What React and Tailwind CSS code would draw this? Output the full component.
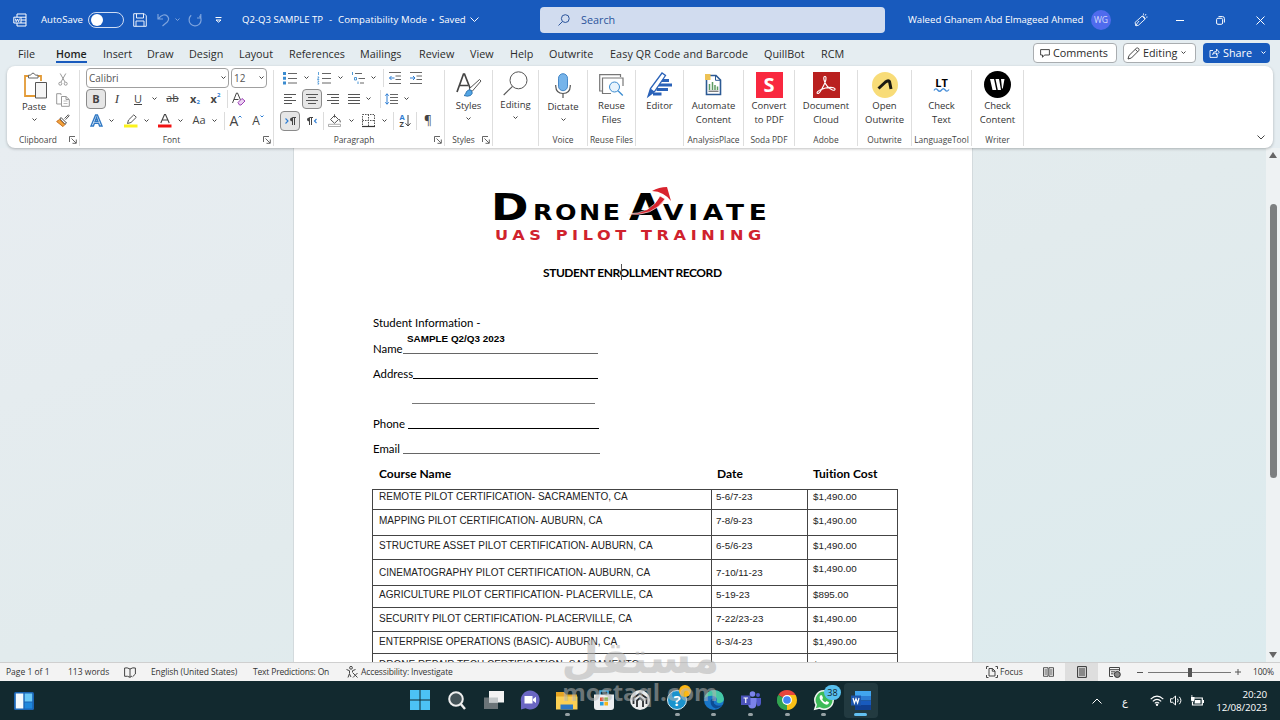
import { clsx } from 'clsx';

const TABS = [
  ['File', 'w-[38px]'],
  ['Home', 'w-[47px]'],
  ['Insert', 'w-[44px]'],
  ['Draw', 'w-[42px]'],
  ['Design', 'w-[50px]'],
  ['Layout', 'w-[50px]'],
  ['References', 'w-[71px]'],
  ['Mailings', 'w-[59px]'],
  ['Review', 'w-[51px]'],
  ['View', 'w-[40px]'],
  ['Help', 'w-[39px]'],
  ['Outwrite', 'w-[61px]'],
  ['Easy QR Code and Barcode', 'w-[154px] tracking-[0.1px]'],
  ['QuillBot', 'w-[57px]'],
  ['RCM', 'w-[30px]'],
];

const COURSES = [
  { name: 'REMOTE PILOT CERTIFICATION- SACRAMENTO, CA', date: '5-6/7-23', cost: '$1,490.00', h: 'h-[20px]', pad: 'pt-0' },
  { name: 'MAPPING PILOT CERTIFICATION- AUBURN, CA', date: '7-8/9-23', cost: '$1,490.00', h: 'h-[26px]', pad: 'pt-[4px]' },
  { name: 'STRUCTURE ASSET PILOT CERTIFICATION- AUBURN, CA', date: '6-5/6-23', cost: '$1,490.00', h: 'h-[24px]', pad: 'pt-[3px]' },
  { name: 'CINEMATOGRAPHY PILOT CERTIFICATION- AUBURN, CA', date: '7-10/11-23', cost: '$1,490.00', h: 'h-[26px]', pad: 'pt-[6px]', costPad: 'pt-[2px]' },
  { name: 'AGRICULTURE PILOT CERTIFICATION- PLACERVILLE, CA', date: '5-19-23', cost: '$895.00', h: 'h-[22px]', pad: 'pt-[2px]' },
  { name: 'SECURITY PILOT CERTIFICATION- PLACERVILLE, CA', date: '7-22/23-23', cost: '$1,490.00', h: 'h-[24px]', pad: 'pt-[4px]' },
  { name: 'ENTERPRISE OPERATIONS (BASIC)- AUBURN, CA', date: '6-3/4-23', cost: '$1,490.00', h: 'h-[22px]', pad: 'pt-[3px]' },
  { name: 'DRONE REPAIR TECH CERTIFICATION- SACRAMENTO', date: '7-18-23', cost: '$495.00', h: 'h-[24px]', pad: 'pt-[4px]' },
];

function Svg({ w, h, children, className }) {
  return (
    <svg width={w} height={h} viewBox={`0 0 ${w} ${h}`} fill="none" className={clsx('block shrink-0 overflow-visible', className)}>
      {children}
    </svg>
  );
}

function Chevron({ w = 5, className = 'text-[#444]' }) {
  return (
    <Svg w={w} h={w / 2 + 1} className={className}>
      <path d={`M.5 .5 L${w / 2} ${w / 2} L${w - 0.5} .5`} stroke="currentColor" strokeWidth="1" />
    </Svg>
  );
}

function Cell({ className, children }) {
  return <div className={clsx('flex shrink-0 items-center justify-center', className)}>{children}</div>;
}

function Rule({ className }) {
  return <div className={clsx('h-[18px] w-px shrink-0 bg-[#dcdcdc]', className)} />;
}

function Lines({ rows, color = '#555' }) {
  return (
    <Svg w={12} h={12}>
      {rows.map(([x1, x2], i) => (
        <path key={i} d={`M${x1} ${i * 3 + 1.5}H${x2}`} stroke={color} strokeWidth="1" />
      ))}
    </Svg>
  );
}

function Launcher() {
  return (
    <Svg w={8} h={8}>
      <path d="M.5 6V.5H6M2.5 2.5L7 7M7.3 3.5V7.3H3.5" stroke="#555" strokeWidth=".9" />
    </Svg>
  );
}

function TitleBar() {
  return (
    <div className="flex h-10 shrink-0 items-center bg-[#185abd] text-[9.6px] whitespace-nowrap text-white">
      <Cell className="ml-[12px] w-4">
        <Svg w={14} h={14}>
          <path d="M4 1H13V13H4V10M4 4V1M8 4.2H13M8 7H13M8 10H13" stroke="#fff" />
          <path d="M.8 4.2H8V10H.8Z" fill="#185abd" stroke="#fff" />
          <path d="M2.3 5.6L3.2 8.7L4.4 6L5.6 8.7L6.5 5.6" stroke="#fff" strokeWidth=".9" />
        </Svg>
      </Cell>
      <div className="ml-[13px] w-[47px]">AutoSave</div>
      <div className="flex h-4 w-9 items-center rounded-full border border-[#cfdcf3] pl-[2px]">
        <div className="h-3 w-3 rounded-full bg-white" />
      </div>
      <Cell className="ml-2 w-4">
        <Svg w={14} h={14}>
          <path d="M.7 .7H11.2L13.3 2.8V13.3H.7ZM3.5 .7V5H10.5V.7M3 13.3V8H11V13.3" stroke="#e8effb" />
        </Svg>
      </Cell>
      <Cell className="ml-[7px] w-4 text-[#7da3dd]">
        <Svg w={13} h={14}>
          <path d="M1 1V6H6M1.2 5.8C5 1.5 8 1 10.2 3C12.2 5 12 7 10.2 9L5.5 13" stroke="currentColor" strokeWidth="1.2" />
        </Svg>
      </Cell>
      <Cell className="w-[13px]"><Chevron className="text-[#7da3dd]" /></Cell>
      <Cell className="ml-[3px] w-4 text-[#7da3dd]">
        <Svg w={14} h={14}>
          <path d="M12.8 1V5H9M3.2 2.3A6 6 0 1 0 11.5 2.8L12.8 4.6" stroke="currentColor" strokeWidth="1.2" />
        </Svg>
      </Cell>
      <Cell className="ml-[6px] w-[18px]">
        <Svg w={7} h={6}><path d="M.5 .5H6.5M1 3L3.5 5.2L6 3Z" stroke="#fff" /></Svg>
      </Cell>
      <div className="ml-[15px] w-[87px]">Q2-Q3 SAMPLE TP</div>
      <div className="w-[9px]">-</div>
      <div className="w-[93px] tracking-[0.1px]">Compatibility Mode</div>
      <div className="w-[8px]">•</div>
      <div className="w-[29px]">Saved</div>
      <Cell className="w-3"><Chevron w={9} className="text-white" /></Cell>
      <div className="ml-[60px] flex h-[26px] w-[345px] items-center rounded bg-[#d1dcef] text-[10.8px] text-[#2b549b]">
        <Svg w={12} h={12} className="ml-[18px]">
          <circle cx="7.3" cy="4.6" r="3.9" stroke="#2b549b" />
          <path d="M4.5 7.5L.5 11.5" stroke="#2b549b" />
        </Svg>
        <span className="ml-[11px]">Search</span>
      </div>
      <div className="ml-[23px] w-[183px]">Waleed Ghanem Abd Elmageed Ahmed</div>
      <Cell className="h-5 w-5 rounded-full bg-[#4f6bed] text-[8.5px] text-[#d5dcfa]">WG</Cell>
      <Cell className="ml-[22px] w-4">
        <Svg w={14} h={14}>
          <path d="M8.2 3L1 9.5L2 12.8L4.5 12.2L11 6.2ZM1.5 12.7L5 8M9 2.5L11.5 6M9.5 .5V1.8M12 1L11.2 2.5M13.5 4L12.2 4.2" stroke="#fff" strokeWidth=".9" />
        </Svg>
      </Cell>
      <Cell className="ml-[22px] w-[18px]"><div className="h-px w-2 bg-white" /></Cell>
      <Cell className="ml-[22px] w-[18px]">
        <Svg w={9} h={9}>
          <rect x=".6" y="2.3" width="6" height="6" rx="1.3" stroke="#fff" />
          <path d="M2.5 .6H6.5Q8.4 .6 8.4 2.5V6.5" stroke="#fff" />
        </Svg>
      </Cell>
      <Cell className="ml-[22px] w-[18px]">
        <Svg w={9} h={9}><path d="M.5 .5L8.5 8.5M8.5 .5L.5 8.5" stroke="#fff" /></Svg>
      </Cell>
    </div>
  );
}

function TabRow() {
  return (
    <div className="flex h-[26px] shrink-0 pl-[18px] text-[10.8px] whitespace-nowrap text-[#2b2b2b]">
      {TABS.map(([label, width]) => (
        <div key={label} className={clsx('flex shrink-0 pt-[6px]', width)}>
          <span
            className={clsx(
              'h-[17px] leading-4',
              label === 'Home' && 'border-b-2 border-[#185abd] text-[10.6px] font-semibold text-[#1f1f1f]'
            )}
          >
            {label}
          </span>
        </div>
      ))}
      <div className="mt-[3px] ml-[182px] flex h-5 w-[84px] shrink-0 items-center rounded border border-[#a9adb0] bg-white pl-[6px]">
        <Svg w={10} h={9}>
          <path d="M.6 .6H9.4V6H4.5L2.5 8.3V6H.6Z" stroke="#333" strokeWidth=".9" />
        </Svg>
        <span className="ml-[3px]">Comments</span>
      </div>
      <div className="mt-[3px] ml-[6px] flex h-5 w-[73px] shrink-0 items-center rounded border border-[#a9adb0] bg-white pl-[3px]">
        <Svg w={13} h={13}>
          <path d="M1 12L2 8.5L9.3 1.3Q10.5 .5 11.6 1.5Q12.5 2.6 11.7 3.7L4.4 11L1 12ZM8.3 2.4L10.6 4.7" stroke="#333" strokeWidth=".9" />
        </Svg>
        <span className="ml-[3px]">Editing</span>
        <span className="ml-1"><Chevron /></span>
      </div>
      <div className="mt-[3px] ml-[7px] flex h-5 w-[67px] shrink-0 items-center rounded bg-[#185abd] pl-[6px] text-white">
        <Svg w={11} h={10}>
          <path d="M4 2.5H1V9.4H8.2V7M3.5 6.5Q4 3.5 7.5 3.3V1L10.3 4.2L7.5 7V5Q5 4.8 3.5 6.5Z" stroke="#fff" strokeWidth=".9" />
        </Svg>
        <span className="ml-[3px]">Share</span>
        <span className="ml-[9px]"><Chevron className="text-white" /></span>
      </div>
    </div>
  );
}

function Group({ width, label, launcher, children }) {
  return (
    <div className={clsx('flex h-[76px] shrink-0 flex-col border-r border-[#dedede]', width)}>
      <div className="h-[64px]">{children}</div>
      <div className="flex h-3 items-center text-[8.4px] whitespace-nowrap text-[#444]">
        <div className="flex flex-1 justify-center">{label}</div>
        {launcher && <div className="w-[10px]"><Launcher /></div>}
      </div>
    </div>
  );
}

function BigButton({ icon, lines, chevron, className }) {
  return (
    <div className={clsx('flex flex-col items-center text-[9.5px] leading-[13.5px] whitespace-nowrap text-[#333]', className)}>
      <div className="flex h-[29px] items-center justify-center">{icon}</div>
      {lines.map((line) => (
        <div key={line}>{line}</div>
      ))}
      {chevron && <div className="pt-[4px]"><Chevron /></div>}
    </div>
  );
}

function ClipboardGroup() {
  return (
    <Group width="w-[73px]" label="Clipboard" launcher>
      <div className="flex">
        <BigButton
          className="ml-3 w-[30px] pt-[1px]"
          chevron
          lines={['Paste']}
          icon={
            <Svg w={25} h={27} className="ml-[3px]">
              <path d="M6 4H2V24H12M18 9V4H14" stroke="#e39a35" strokeWidth="1.8" />
              <path d="M5.5 6V3.2H7.5Q10 -1 12.5 3.2H15V6Z" fill="#fff" stroke="#666" />
              <path d="M12.5 10.5H23.5V26H12.5Z" fill="#f5f5f5" stroke="#555" />
            </Svg>
          }
        />
        <div className="-mt-px ml-[6px] flex w-4 flex-col items-center">
          <Cell className="h-[20px]">
            <Svg w={10} h={13}>
              <path d="M2.2 .5L7 9M7.8 .5L3 9" stroke="#999" />
              <circle cx="2.3" cy="10.7" r="1.5" stroke="#999" />
              <circle cx="7.7" cy="10.7" r="1.5" stroke="#999" />
            </Svg>
          </Cell>
          <Cell className="h-[21px]">
            <Svg w={14} h={14}>
              <path d="M5 2V.7H.7V11H5M5.5 3.5H10L13.3 6.5V13.3H5.5ZM10 3.5V6.5H13" stroke="#999" />
              <path d="M7.5 8H11.5M7.5 10.5H11.5" stroke="#bbb" />
            </Svg>
          </Cell>
          <Cell className="h-[21px]">
            <Svg w={14} h={13}>
              <path d="M8.5 4.5L12.3 .8L13.2 1.8L9.6 5.6" fill="#fff" stroke="#555" />
              <path d="M5 3.5L10.5 9L9 10.3L3.8 5Z" fill="#fff" stroke="#444" />
              <path d="M3.5 5.5L8.8 10.6L7 12.6L.6 7.5Z" fill="#f2a33c" stroke="#c96f1c" />
            </Svg>
          </Cell>
        </div>
      </div>
    </Group>
  );
}

function FontGroup() {
  return (
    <Group width="w-[194px]" label="Font" launcher>
      <div className="flex flex-col pl-[6px] text-[#444]">
        <div className="-mt-[2px] flex h-[20px] text-[10px] text-[#555]">
          <div className="flex w-[143px] items-center justify-between rounded border border-[#a0a0a0] px-[2px]">
            Calibri <Chevron />
          </div>
          <div className="ml-[2px] flex w-9 items-center justify-between rounded border border-[#a0a0a0] px-[2px]">
            12 <Chevron />
          </div>
        </div>
        <div className="mt-[1px] flex h-[20px] items-center">
          <Cell className="h-5 w-5 rounded border border-[#8a8a8a] bg-[#e6e6e6] text-[11px] font-bold">B</Cell>
          <Cell className="ml-px w-5 font-['Liberation_Serif'] text-[13px] italic">I</Cell>
          <Cell className="w-[22px] text-[11px] underline">U</Cell>
          <Cell className="w-[10px]"><Chevron /></Cell>
          <Cell className="w-[27px] text-[10.5px] line-through">ab</Cell>
          <Cell className="w-[18px] text-[11px] font-bold">x<span className="pt-[7px] text-[6px] text-[#2b7cd3]">2</span></Cell>
          <Cell className="w-[23px] text-[11px] font-bold">x<span className="pb-[7px] text-[6px] text-[#2b7cd3]">2</span></Cell>
          <Rule />
          <Cell className="w-[22px]">
            <Svg w={14} h={14}>
              <path d="M.5 11L4.5 1H5.5L8.5 8M2 7.5H6.5" stroke="#444" />
              <path d="M6 10.5L10 6.5L13 9L9 13H7.5Z" fill="#ecd3f2" stroke="#9b3fb5" />
            </Svg>
          </Cell>
        </div>
        <div className="flex h-[23px] items-center">
          <Cell className="w-5">
            <Svg w={13} h={13}>
              <path d="M1 12L5.6 1H7.4L12 12H9.6L8.6 9.2H4.4L3.4 12ZM5.1 7.2H7.9L6.5 3.4Z" fill="#fff" stroke="#2f78c4" strokeWidth="1.4" />
            </Svg>
          </Cell>
          <Cell className="w-[10px]"><Chevron /></Cell>
          <Cell className="ml-[5px] w-5">
            <Svg w={14} h={14}>
              <path d="M0 10.5H13.5V13.5H0Z" fill="#fbf21b" />
              <path d="M3.5 9.5L4.5 6L9.8 .8L12.3 3.3L7 8.5Z" fill="#fff" stroke="#555" />
            </Svg>
          </Cell>
          <Cell className="w-[10px]"><Chevron /></Cell>
          <Cell className="ml-1 w-5">
            <Svg w={14} h={14}>
              <path d="M2.8 9L6.5 .5H7.5L11.2 9M4 6H10" stroke="#444" strokeWidth="1.1" />
              <path d="M0 10.5H13.5V13.5H0Z" fill="#f11313" />
            </Svg>
          </Cell>
          <Cell className="w-[10px]"><Chevron /></Cell>
          <Cell className="ml-1 w-5 text-[11px]">Aa</Cell>
          <Cell className="w-[10px]"><Chevron /></Cell>
          <Rule className="ml-[5px]" />
          <Cell className="w-[22px] text-[14px]">A<span className="-mt-[8px]"><Chevron w={4} className="rotate-180 text-[#2b7cd3]" /></span></Cell>
          <Cell className="w-[22px] text-[12px]">A<span className="-mt-[8px]"><Chevron w={4} className="text-[#2b7cd3]" /></span></Cell>
        </div>
      </div>
    </Group>
  );
}

function ListIcon({ kind }) {
  return (
    <Svg w={14} h={12}>
      {kind === 'bullet' && <path d="M0 0H3V3H0ZM0 4.7H3V7.7H0ZM0 9.4H3V12.4H0Z" fill="#3a8bd0" />}
      {kind === 'number' && <path d="M1.5 0V3M.5 5H2L.5 7.5H2.2M.5 9H2L1 10.5L2 12H.5" stroke="#3a8bd0" strokeWidth=".8" />}
      {kind === 'multi' ? (
        <>
          <path d="M1.5 0V3M3.5 5.5H5.5V8H3.5ZM7 9.5V12" stroke="#3a8bd0" strokeWidth=".9" />
          <path d="M4 1.5H11M7.5 6.5H14M9 11H13" stroke="#666" />
        </>
      ) : (
        <path d="M5 1.5H14M5 6.5H14M5 11H14" stroke="#666" />
      )}
    </Svg>
  );
}

function IndentIcon({ out }) {
  return (
    <Svg w={12} h={12}>
      <path d="M0 .5H12M6.5 4H12M6.5 7.5H12M0 11.5H12" stroke="#666" />
      <path d={out ? 'M5.5 6H.5M2.5 4L.5 6L2.5 8' : 'M0 6H5M3 4L5 6L3 8'} stroke="#2b7cd3" />
    </Svg>
  );
}

function ParagraphGroup() {
  return (
    <Group width="w-[171px]" label="Paragraph" launcher>
      <div className="flex flex-col pl-[6px] text-[#444]">
        <div className="-mt-[2px] flex h-[20px] items-center">
          <Cell className="w-5"><ListIcon kind="bullet" /></Cell>
          <Cell className="ml-px w-[10px]"><Chevron /></Cell>
          <Cell className="ml-[3px] w-5"><ListIcon kind="number" /></Cell>
          <Cell className="ml-px w-[10px]"><Chevron /></Cell>
          <Cell className="ml-[3px] w-5"><ListIcon kind="multi" /></Cell>
          <Cell className="w-[10px]"><Chevron /></Cell>
          <Rule className="ml-[5px]" />
          <Cell className="ml-px w-5"><IndentIcon out /></Cell>
          <Cell className="ml-px w-5"><IndentIcon /></Cell>
        </div>
        <div className="mt-[1px] flex h-[20px] items-center">
          <Cell className="w-5"><Lines rows={[[0, 12], [0, 8], [0, 12], [0, 8]]} /></Cell>
          <Cell className="ml-[2px] h-5 w-5 rounded border border-[#8a8a8a] bg-[#e6e6e6]"><Lines rows={[[0, 12], [2, 10], [0, 12], [2, 10]]} /></Cell>
          <Cell className="ml-px w-5"><Lines rows={[[0, 12], [4, 12], [0, 12], [4, 12]]} /></Cell>
          <Cell className="ml-px w-5"><Lines rows={[[0, 12], [0, 12], [0, 12], [0, 12]]} /></Cell>
          <Cell className="w-2"><Chevron /></Cell>
          <Rule className="ml-2" />
          <Cell className="w-5">
            <Svg w={13} h={12}>
              <path d="M5 1.5H13M5 4.5H13M5 7.5H13M5 10.5H13" stroke="#666" />
              <path d="M2 .8V11.2M.3 2.7L2 .8L3.7 2.7M.3 9.3L2 11.2L3.7 9.3" stroke="#2b7cd3" />
            </Svg>
          </Cell>
          <Cell className="w-[10px]"><Chevron /></Cell>
        </div>
        <div className="flex h-[23px] items-center">
          <Cell className="h-5 w-5 rounded border border-[#8a8a8a] bg-[#e6e6e6]">
            <Svg w={11} h={8}>
              <path d="M.5 1.5L3 4L.5 6.5" stroke="#2b7cd3" strokeWidth="1.1" />
              <path d="M7.5 8V.5H11M9.5 .5V8" stroke="#444" />
              <path d="M7.5 .5V4.5Q5 4.5 5 2.5Q5 .5 7.5 .5Z" fill="#444" />
            </Svg>
          </Cell>
          <Cell className="ml-[2px] w-5">
            <Svg w={10} h={8}>
              <path d="M9.5 2L7.5 4L9.5 6" stroke="#2b7cd3" strokeWidth="1.1" />
              <path d="M2.5 8V.5H6M4.5 .5V8" stroke="#444" />
              <path d="M2.5 .5V4.5Q0 4.5 0 2.5Q0 .5 2.5 .5Z" fill="#444" />
            </Svg>
          </Cell>
          <Rule className="ml-px" />
          <Cell className="w-[22px]">
            <Svg w={14} h={13}>
              <path d="M2.5 5.5L6.5 1.5L10.5 5.5L6.5 9.3ZM6.5 3.5V.3M11 5Q12.5 7 12.3 8.3" stroke="#555" />
              <path d="M.5 10.3H12.5V12.5H.5Z" stroke="#999" strokeWidth=".8" />
            </Svg>
          </Cell>
          <Cell className="w-[10px]"><Chevron /></Cell>
          <Cell className="ml-[2px] w-5">
            <Svg w={13} h={13}>
              <path d="M.5 .5H12.5V12.5H.5ZM6.5 .5V12.5M.5 6.5H12.5" stroke="#555" strokeDasharray="1.5 1" />
              <path d="M0 12.5H13" stroke="#333" strokeWidth="1.2" />
            </Svg>
          </Cell>
          <Cell className="ml-px w-[10px]"><Chevron /></Cell>
          <Rule className="ml-1" />
          <Cell className="w-[22px]">
            <div className="flex flex-col text-[7.5px] leading-[7px] font-bold">
              <span className="text-[#2b7cd3]">A</span>
              <span>Z</span>
            </div>
            <Svg w={6} h={12}><path d="M3 0V11M.5 8.3L3 11L5.5 8.3" stroke="#444" /></Svg>
          </Cell>
          <Rule />
          <Cell className="w-[22px] text-[12px]">¶</Cell>
        </div>
      </div>
    </Group>
  );
}

const StylesIcon = (
  <Svg w={26} h={25}>
    <path d="M1 20L7.5 2H8.5L14 16M3.5 13.5H12" stroke="#444" strokeWidth="1.7" />
    <path d="M13 17L23.5 7.5L25 9L16 19.5Z" fill="#fff" stroke="#555" />
    <path d="M8 23.5Q10 22.5 10.5 19.5Q13 16.5 15.5 18.5Q17.5 21.5 14.5 23.5Q11.5 25 8 23.5Z" fill="#53a5e4" stroke="#2367a3" strokeWidth=".8" />
  </Svg>
);

const MicIcon = (
  <Svg w={16} h={26}>
    <rect x="3.5" y=".7" width="9" height="17" rx="4.5" fill="#76b4ea" stroke="#4688c8" />
    <path d="M.7 12V13Q1 20.5 8 20.5Q15 20.5 15.3 13V12M8 20.5V25" stroke="#555" strokeWidth="1.2" />
  </Svg>
);

const ReuseIcon = (
  <Svg w={25} h={22}>
    <path d="M3 17H.7V.7H21.5V3M3.5 20V4H24V12" stroke="#777" strokeWidth="1.2" />
    <path d="M3.5 19.5H12" stroke="#777" />
    <circle cx="15.5" cy="13" r="5" fill="#e8f3fc" stroke="#3a8bd0" />
    <path d="M19 16.8L23.8 21.5" stroke="#3a8bd0" strokeWidth="1.3" />
  </Svg>
);

const EditorIcon = (
  <Svg w={25} h={26}>
    <path d="M14 8.5H22M12 13H25M9.5 17.5H21M6 22H14.5" stroke="#2a62b8" strokeWidth="3.2" />
    <path d="M1 24.5L3.5 16.5L15 1L18.5 3.5L7.5 19.5Z" fill="#fff" stroke="#2a62b8" strokeWidth="1.3" />
    <path d="M3.5 16.5L7.5 19.5L1 24.5Z" fill="#2a62b8" />
  </Svg>
);

const AutomateIcon = (
  <Svg w={17} h={22}>
    <path d="M1.5 1.5H11L15.5 6V20.5H1.5Z" fill="#fff" stroke="#2c5a94" strokeWidth="1.6" />
    <path d="M10.5 1.5V6.3H15.5" stroke="#2c5a94" />
    <path d="M0 0H5.5V6H0Z" fill="#edc255" />
    <path d="M4.5 16V10M7.5 16V8M10 16V11M12.5 16V12.5" stroke="#5c9b62" strokeWidth="1.5" />
    <path d="M3.5 17.2H13.5" stroke="#444" />
  </Svg>
);

const AdobeIcon = (
  <div className="flex h-[26px] w-[27px] items-center justify-center bg-[#b9201f]">
    <Svg w={20} h={20}>
      <path d="M9 1.5Q7 1.5 8.2 5.5Q10 12 16.5 15Q19.5 15.8 19 13.7Q17.5 11.5 9.5 13Q1 15.5 1 18Q2.5 20 5.5 14.5Q10.5 6 10 2.5Q9.8 1.5 9 1.5Z" stroke="#fff" strokeWidth="1.1" />
    </Svg>
  </div>
);

const OutwriteIcon = (
  <div className="flex h-[26px] w-[26px] items-center justify-center rounded-full bg-[#f8dc78]">
    <Svg w={16} h={12}>
      <path d="M1.5 9.5L8.5 3Q11 1 12.5 2.5L14 10" stroke="#1c1a12" strokeWidth="3" strokeLinejoin="round" />
    </Svg>
  </div>
);

const LanguageToolIcon = (
  <div className="flex flex-col items-center text-[11px] leading-[10px] font-bold text-black">
    LT
    <Svg w={15} h={4}>
      <path d="M0 2.5Q1.8 -.5 3.7 2T7.5 2T11.2 2T15 1.5" stroke="#4a90d9" strokeWidth="1.3" />
    </Svg>
  </div>
);

const WriterIcon = (
  <div className="flex h-[27px] w-[27px] items-center justify-center rounded-full bg-black">
    <Svg w={15} h={11}>
      <path d="M0 0H4L6.3 11H2.5ZM5.5 0H9L11 11H7.8ZM11 0H14.5L12.8 9.5H12Z" fill="#fff" />
    </Svg>
  </div>
);

function Ribbon() {
  return (
    <div className="z-10 mx-[7px] flex h-[82px] shrink-0 rounded-lg bg-white pt-1 shadow-[0_1px_3px_rgba(0,0,0,0.25)]">
      <ClipboardGroup />
      <FontGroup />
      <ParagraphGroup />
      <Group width="w-[48px]" label="Styles" launcher>
        <BigButton lines={['Styles']} chevron icon={StylesIcon} />
      </Group>
      <Group width="w-[46px]">
        <BigButton
          className="-mt-px"
          lines={['Editing']}
          chevron
          icon={
            <Svg w={25} h={25}>
              <circle cx="15.5" cy="9.3" r="8.5" stroke="#555" />
              <path d="M9.5 15.3L.7 24" stroke="#555" strokeWidth="1.1" />
            </Svg>
          }
        />
      </Group>
      <Group width="w-[49px]" label="Voice">
        <BigButton className="pt-[1px]" lines={['Dictate']} chevron icon={MicIcon} />
      </Group>
      <Group width="w-[48px]" label="Reuse Files">
        <BigButton lines={['Reuse', 'Files']} icon={ReuseIcon} />
      </Group>
      <Group width="w-[48px]">
        <BigButton lines={['Editor']} icon={EditorIcon} />
      </Group>
      <Group width="w-[60px]" label="AnalysisPlace">
        <BigButton lines={['Automate', 'Content']} icon={AutomateIcon} />
      </Group>
      <Group width="w-[51px]" label="Soda PDF">
        <BigButton
          lines={['Convert', 'to PDF']}
          icon={<div className="flex h-[26px] w-[27px] items-center justify-center bg-[#f9283f] text-[20px] font-bold text-white">S</div>}
        />
      </Group>
      <Group width="w-[63px]" label="Adobe">
        <BigButton lines={['Document', 'Cloud']} icon={AdobeIcon} />
      </Group>
      <Group width="w-[54px]" label="Outwrite">
        <BigButton lines={['Open', 'Outwrite']} icon={OutwriteIcon} />
      </Group>
      <Group width="w-[60px]" label="LanguageTool">
        <BigButton lines={['Check', 'Text']} icon={LanguageToolIcon} />
      </Group>
      <Group width="w-[52px]" label="Writer">
        <BigButton lines={['Check', 'Content']} icon={WriterIcon} />
      </Group>
      <div className="mr-2 mb-2 ml-auto flex items-end"><Chevron w={8} /></div>
    </div>
  );
}

function Logo() {
  return (
    <div className="relative ml-[122px] flex h-[56px] w-[280px] flex-col font-['DejaVu_Sans'] font-bold whitespace-nowrap">
      <div className="flex h-[38px] items-baseline pt-[8px] text-[22px] leading-[16px] text-black">
        <span className="-ml-[4px] w-[42px] origin-left scale-x-[1.22] text-[37px] leading-[28px]">D</span>
        <span className="w-[96px] origin-left scale-x-[1.15] tracking-[2.2px]">RONE</span>
        <span className="w-[34px] origin-left scale-x-[1.15] text-[37px] leading-[28px]">A</span>
        <span className="origin-left scale-x-[1.2] tracking-[4px]">VIATE</span>
      </div>
      <div className="mt-[4px] origin-left scale-x-[1.15] text-[14px] leading-[14px] tracking-[4px] text-[#d0222d]">UAS PILOT TRAINING</div>
      <svg className="absolute top-[1px] left-[132px]" width="46" height="30" viewBox="0 0 46 30" fill="none">
        <path d="M0 27Q24 27 33 9L38 12Q26 30 0 27Z" fill="#d8232e" stroke="#fff" strokeWidth=".6" />
        <path d="M25 4Q32 0 40 0L44 14Q40 9 36 7Q31 4 25 4Z" fill="#d8232e" />
      </svg>
    </div>
  );
}

function Field({ label, className, lineClass }) {
  return (
    <div className={clsx('flex h-[25px] items-end', className)}>
      <span className="leading-[11px]">{label}</span>
      <div className={clsx('h-px', lineClass)} />
    </div>
  );
}

function DocumentPage() {
  return (
    <div className="ml-[293px] h-[520px] w-[680px] shrink-0 border-x border-[#d3dadd] bg-white pt-[38px] pl-[79px] font-['Lato'] text-[11.4px] text-black [font-variant-ligatures:none]">
      <Logo />
      <div className="relative mt-[23px] ml-[170px] flex h-4 w-[179px] items-center text-[12px] font-bold tracking-[-0.44px] whitespace-nowrap">
        STUDENT ENROLLMENT RECORD
        <div className="absolute -top-px left-[78px] h-4 w-px bg-[#555]" />
      </div>
      <div className="mt-[34px] h-4 leading-4">Student Information -</div>
      <div className="h-[14px] pl-[34px] font-['Liberation_Sans'] text-[9.9px] leading-[15px] font-bold">SAMPLE Q2/Q3 2023</div>
      <Field label="Name" className="-mt-[16px]" lineClass="ml-auto mr-[374px] w-[195px] bg-[#666]" />
      <Field label="Address" lineClass="ml-auto mr-[374px] w-[186px] bg-black" />
      <Field lineClass="ml-[39px] w-[183px] bg-[#777]" />
      <Field label="Phone" lineClass="ml-auto mr-[373px] w-[191px] bg-black" />
      <Field label="Email" lineClass="ml-auto mr-[372px] w-[197px] bg-[#666]" />
      <div className="mt-[12px] flex h-[16px] text-[12px] leading-4 font-bold">
        <div className="w-[338px] pl-[6px]">Course Name</div>
        <div className="w-[96px] pl-[6px]">Date</div>
        <div className="pl-[6px]">Tuition Cost</div>
      </div>
      <div className="mt-[7px] -ml-px w-[526px] border-t border-l border-[#444] font-['Liberation_Sans'] text-[9.8px] leading-[13px] text-[#222]">
        {COURSES.map((c) => (
          <div key={c.name} className={clsx('flex whitespace-nowrap', c.h)}>
            <div className={clsx('w-[339px] border-r border-b border-[#444] pl-[6px] text-[10px]', c.pad)}>{c.name}</div>
            <div className={clsx('w-[96px] border-r border-b border-[#444] pl-[4px]', c.pad)}>{c.date}</div>
            <div className={clsx('w-[90px] border-r border-b border-[#444] pl-[5px]', c.costPad ?? c.pad)}>{c.cost}</div>
          </div>
        ))}
      </div>
    </div>
  );
}

function ScrollBar() {
  return (
    <div className="ml-auto flex w-[14px] flex-col items-center bg-[#eef2f3] pt-1">
      <Svg w={8} h={6}><path d="M0 6L4 0L8 6Z" fill="#666" /></Svg>
      <div className="mt-[46px] h-[274px] w-[7px] rounded-full bg-[#7c7f80]" />
      <Svg w={8} h={6} className="mt-auto mb-[4px]"><path d="M0 0H8L4 6Z" fill="#666" /></Svg>
    </div>
  );
}

function StatusBar() {
  return (
    <div className="flex h-[19px] shrink-0 items-center border-t border-[#cfcfcf] bg-[#f3f3f3] text-[8.5px] whitespace-nowrap text-[#333]">
      <div className="ml-[6px] w-[62px]">Page 1 of 1</div>
      <div className="w-[56px]">113 words</div>
      <div className="w-[27px]">
        <Svg w={12} h={11}>
          <path d="M6 2Q3 .2 .6 1V9.3Q3.5 8.7 6 10.3L8 9M6 2V10.3M6 2Q9 .2 11.4 1V7L8.5 9.8" stroke="#444" />
        </Svg>
      </div>
      <div className="w-[102px] tracking-[-0.1px]">English (United States)</div>
      <div className="w-[93px] tracking-[-0.18px]">Text Predictions: On</div>
      <div className="w-[15px]">
        <Svg w={12} h={12}>
          <circle cx="5" cy="1.8" r="1.4" stroke="#444" />
          <path d="M.5 3.5L3.5 4.7V7.5L2 11.5M9.5 3.5L6.5 4.7V6.5M3.5 8L5 11M7 7L11.5 11.5M11.5 7L7 11.5" stroke="#444" />
        </Svg>
      </div>
      <div className="w-[625px] tracking-[-0.12px]">Accessibility: Investigate</div>
      <div className="w-[14px]">
        <Svg w={12} h={12}>
          <path d="M.5 3V.5H2.5M9.5 .5H11.5V3M11.5 9V11.5H9.5M2.5 11.5H.5V9M3 2.5H6.5L9 5V10H3ZM6.3 2.5V5.2H9" stroke="#333" strokeWidth=".9" />
        </Svg>
      </div>
      <div className="w-[42px]">Focus</div>
      <Cell className="w-[12px]">
        <Svg w={11} h={10}>
          <path d="M.5 .7H5V9.3H.5ZM6 .7H10.5V9.3H6ZM1.5 3H4M1.5 5H4M1.5 7H4M7 3H9.5M7 5H9.5M7 7H9.5" stroke="#444" strokeWidth=".9" />
        </Svg>
      </Cell>
      <Cell className="ml-[11px] h-full w-[33px] bg-[#dedede]">
        <Svg w={10} h={12}>
          <path d="M.6 .6H9.4V11.4H.6ZM2 3H8M2 5H8M2 7H8M2 9H8" stroke="#333" />
        </Svg>
      </Cell>
      <Cell className="ml-[10px] w-[14px]">
        <Svg w={12} h={11}>
          <path d="M4 9.5H.5V.5H10.5V4M.5 2.7H10.5M2 4.8H6M2 6.8H4.5" stroke="#444" />
          <circle cx="8.3" cy="7.5" r="3" fill="#888" stroke="#333" />
        </Svg>
      </Cell>
      <div className="ml-[15px] h-px w-[6px] bg-[#555]" />
      <div className="ml-[5px] flex w-[83px] items-center">
        <div className="h-px w-10 bg-[#777]" />
        <div className="h-[9px] w-[4px] bg-[#555]" />
        <div className="h-px w-[39px] bg-[#777]" />
      </div>
      <Svg w={6} h={6} className="ml-1"><path d="M0 3H6M3 0V6" stroke="#555" /></Svg>
      <div className="ml-[12px] tracking-[-0.2px]">100%</div>
    </div>
  );
}

const APPS = [
  {
    id: 'start',
    icon: <Svg w={20} h={20}><path d="M0 0H9.5V9.5H0ZM10.5 0H20V9.5H10.5ZM0 10.5H9.5V20H0ZM10.5 10.5H20V20H10.5Z" fill="#4cc2f5" /></Svg>,
  },
  {
    id: 'search',
    icon: (
      <Svg w={18} h={19}>
        <circle cx="8" cy="8" r="6.8" fill="#445358" stroke="#eee" strokeWidth="2" />
        <path d="M12.8 13L17 18" stroke="#eee" strokeWidth="2.4" />
      </Svg>
    ),
  },
  {
    id: 'taskview',
    icon: (
      <Svg w={20} h={18}>
        <path d="M0 6.5H14V18H0Z" fill="#6b7478" />
        <path d="M5 0H20V11.5H5Z" fill="#f3f3f3" />
        <path d="M5 6.5H14V11.5H5Z" fill="#c3c8ca" />
      </Svg>
    ),
  },
  {
    id: 'chat',
    icon: (
      <Svg w={20} h={20}>
        <path d="M10 .5A9.5 9.5 0 1 1 5.5 18.3L1 19.5V12A9.5 9.5 0 0 1 10 .5Z" fill="#6a66c2" />
        <path d="M4.5 6H12.5V13.5H4.5ZM13 9L16 6.8V13L13 10.8Z" fill="#fff" />
      </Svg>
    ),
  },
  {
    id: 'explorer',
    open: true,
    icon: (
      <Svg w={22} h={19}>
        <path d="M0 1H8L10 3.5H21V17H0Z" fill="#e6a523" />
        <path d="M0 5.5H21.5V18.5H0Z" fill="#fbd054" />
        <path d="M4.5 18.5V13.5H17V18.5Z" fill="#2c78c5" />
      </Svg>
    ),
  },
  {
    id: 'store',
    icon: (
      <Svg w={20} h={20}>
        <path d="M6 5V1H14V5" stroke="#4ab5ec" strokeWidth="1.6" />
        <path d="M0 4.5H20V17Q20 20 17 20H3Q0 20 0 17Z" fill="#eceef0" />
        <path d="M6 7.5H9.6V11.1H6Z" fill="#e8502b" />
        <path d="M10.4 7.5H14V11.1H10.4Z" fill="#7bb528" />
        <path d="M6 11.9H9.6V15.5H6Z" fill="#219fe0" />
        <path d="M10.4 11.9H14V15.5H10.4Z" fill="#f5b51b" />
      </Svg>
    ),
  },
  {
    id: 'arch',
    icon: (
      <Svg w={20} h={20}>
        <circle cx="10" cy="10" r="10" fill="#eceeef" />
        <path d="M3.5 14V8L10 3.5L16.5 8V14M7 17V10.5L10 8L13 10.5V17" stroke="#2a2d30" strokeWidth="1.8" strokeLinejoin="round" />
      </Svg>
    ),
  },
  {
    id: 'help',
    open: true,
    icon: (
      <div className="relative flex h-5 w-5 items-center justify-center rounded-full border-[1.5px] border-[#d7ebf5] bg-[#1b93cd] text-[15px] leading-none font-bold text-white">
        ?
        <div className="absolute -top-[6px] -right-[5px] h-3 w-3 rounded-full bg-[#fcb714]" />
      </div>
    ),
  },
  {
    id: 'edge',
    open: true,
    icon: (
      <Svg w={20} h={20}>
        <circle cx="10" cy="10" r="10" fill="#1876c9" />
        <path d="M.5 8Q3 0 10.5 0Q19.5 1 20 9Q19.5 13 15 13.2Q11.5 12.5 13 10Q12.5 6 8.5 5.7Q4 5.5 .5 8Z" fill="#45c8a6" />
        <path d="M6.5 11Q6.5 17 12 18.5Q16 18 18.5 15Q13 17 10 13.5Q9 11 11 8.5Q7 8 6.5 11Z" fill="#0d4b94" />
      </Svg>
    ),
  },
  {
    id: 'teams',
    open: true,
    icon: (
      <Svg w={20} h={18}>
        <circle cx="11.5" cy="3" r="2.8" fill="#7b83eb" />
        <circle cx="17" cy="4" r="2" fill="#5059c9" />
        <path d="M14 7H20V12Q20 15 16.5 15.5Z" fill="#5059c9" />
        <path d="M7 7H15.5V13Q15 17.5 11 17.5Q7.5 17.5 7 13Z" fill="#7b83eb" />
        <path d="M0 4.5H9.5V14H0Z" fill="#4b53bc" />
        <path d="M2.5 7H7M4.75 7V12" stroke="#fff" strokeWidth="1.2" />
      </Svg>
    ),
  },
  {
    id: 'chrome',
    open: true,
    icon: (
      <Svg w={20} h={20}>
        <path d="M10 10L1.34 5A10 10 0 0 1 18.66 5Z" fill="#e8453c" />
        <path d="M10 10L18.66 5A10 10 0 0 1 10 20Z" fill="#fbc116" />
        <path d="M10 10L10 20A10 10 0 0 1 1.34 5Z" fill="#32a350" />
        <path d="M10 5H18.66L14.3 12.5ZM5.7 12.5L10 20L14.3 12.5Z" fill="#fbc116" />
        <path d="M1.34 5L5.7 12.5L10 15L10 20A10 10 0 0 1 1.34 5Z" fill="#32a350" />
        <circle cx="10" cy="10" r="4.9" fill="#fff" />
        <circle cx="10" cy="10" r="3.8" fill="#4285f4" />
      </Svg>
    ),
  },
  {
    id: 'whatsapp',
    open: true,
    icon: (
      <div className="relative">
        <Svg w={20} h={20}>
          <path d="M10 .8A9.2 9.2 0 1 1 5.5 18L.8 19.2L2.2 14.8A9.2 9.2 0 0 1 10 .8Z" fill="#3dbb58" stroke="#f1f5f2" strokeWidth="1.5" />
          <path d="M6.5 5.2Q4.7 7 6.5 10Q9 14 13 14.8Q15 14.2 15 12.3L12.5 11L11.3 12.3Q9 11.2 8.2 9.2L9 8L8 5.3Z" fill="#fff" />
        </Svg>
        <div className="absolute -top-[5px] -right-[7px] flex h-[15px] w-[17px] items-center justify-center rounded-full bg-[#58c0ee] text-[9px] text-[#10242c]">38</div>
      </div>
    ),
  },
  {
    id: 'word',
    active: true,
    icon: (
      <Svg w={20} h={19}>
        <path d="M4 0H20V5H4Z" fill="#41a5ee" />
        <path d="M4 5H20V9.5H4Z" fill="#2b7cd3" />
        <path d="M4 9.5H20V14H4Z" fill="#185abd" />
        <path d="M4 14H20V19H4Z" fill="#103f91" />
        <path d="M0 4.5H10V14.5H0Z" fill="#1c56ad" />
        <path d="M2 7L3.4 12L5 7.7L6.6 12L8 7" stroke="#fff" strokeWidth="1.2" />
      </Svg>
    ),
  },
];

function Taskbar() {
  return (
    <div className="flex h-[39px] shrink-0 items-center bg-[#12292f] text-white">
      <Svg w={20} h={18} className="ml-[14px]">
        <rect width="20" height="18" rx="1.5" fill="#1a65b5" />
        <path d="M1.8 1.5H9.3V16.5H1.8Z" fill="#f5fafd" />
        <path d="M10.7 1.5H18.2V9.5H10.7Z" fill="#6bc8f6" />
        <path d="M10.7 10.5H18.2V16.5H10.7Z" fill="#1e87dc" />
      </Svg>
      <div className="ml-[368px] flex h-full w-[478px]">
        {APPS.map((app) => (
          <div key={app.id} className="flex h-full w-[36.7px] shrink-0 items-center justify-center">
            <div className={clsx('flex h-[35px] w-[34px] flex-col items-center rounded', app.active && 'bg-[#223a40]')}>
              <div className="flex h-[31px] items-center pt-[3px]">{app.icon}</div>
              {app.open && <div className="mt-[-1px] h-[3px] w-[5px] rounded-full bg-[#96a1a4]" />}
              {app.active && <div className="mt-[-1px] h-[3px] w-[13px] rounded-full bg-[#63c0f0]" />}
            </div>
          </div>
        ))}
      </div>
      <Svg w={10} h={6} className="ml-[212px]"><path d="M.5 5.5L5 1L9.5 5.5" stroke="#fff" /></Svg>
      <div className="ml-[18px] w-[10px] pt-[2px] text-center font-['DejaVu_Sans'] text-[10px]">ع</div>
      <Svg w={14} h={11} className="ml-[20px]">
        <path d="M.7 4.2Q7 -2 13.3 4.2M2.8 6.3Q7 2.3 11.2 6.3M4.8 8.4Q7 6.2 9.2 8.4" stroke="#fff" strokeWidth="1.1" />
        <circle cx="7" cy="9.8" r="1.2" fill="#fff" />
      </Svg>
      <Svg w={12} h={11} className="ml-[6px]">
        <path d="M.6 3.7H2.7L5.5 1V10L2.7 7.3H.6ZM7.5 3.7Q8.8 5.5 7.5 7.3M9.3 1.8Q12.5 5.5 9.3 9.2" stroke="#fff" />
      </Svg>
      <Svg w={14} h={12} className="ml-[8px]">
        <path d="M4 3H12.3V10H2.5V7" stroke="#fff" strokeWidth="1.2" />
        <path d="M5 5H10.5V8.5H4.5ZM12.5 5H14V8H12.5ZM1 2H4.5V5Q4.5 6.5 2.7 6.5Q1 6.5 1 5ZM1.5 0H2.3V2H1.5Z" fill="#fff" />
      </Svg>
      <div className="mr-[13px] ml-auto text-right text-[9.8px] leading-[13px] tracking-[-0.12px]">
        <div>20:20</div>
        <div>12/08/2023</div>
      </div>
    </div>
  );
}

export default function App() {
  return (
    <div className="relative flex h-[720px] w-[1280px] flex-col overflow-hidden bg-[#e5edf1] font-['Open_Sans',sans-serif]">
      <TitleBar />
      <TabRow />
      <Ribbon />
      <div className="flex h-[514px] shrink-0 overflow-hidden bg-linear-to-br from-[#e8edf1] via-[#e2ebed] to-[#dcebee]">
        <DocumentPage />
        <ScrollBar />
      </div>
      <StatusBar />
      <Taskbar />
      {/* Watermark over the lower part of the window */}
      <div className="pointer-events-none absolute top-[634px] left-[560px] z-20 flex h-20 w-[160px] flex-col items-center font-bold text-[#b4b4b4] opacity-55">
        <div className="h-[46px] origin-center scale-x-[0.98] font-['DejaVu_Sans'] text-[44px] leading-[48px]" dir="rtl">مستقل</div>
        <div className="text-[24px] leading-[24px]">mostaql.com</div>
      </div>
    </div>
  );
}
